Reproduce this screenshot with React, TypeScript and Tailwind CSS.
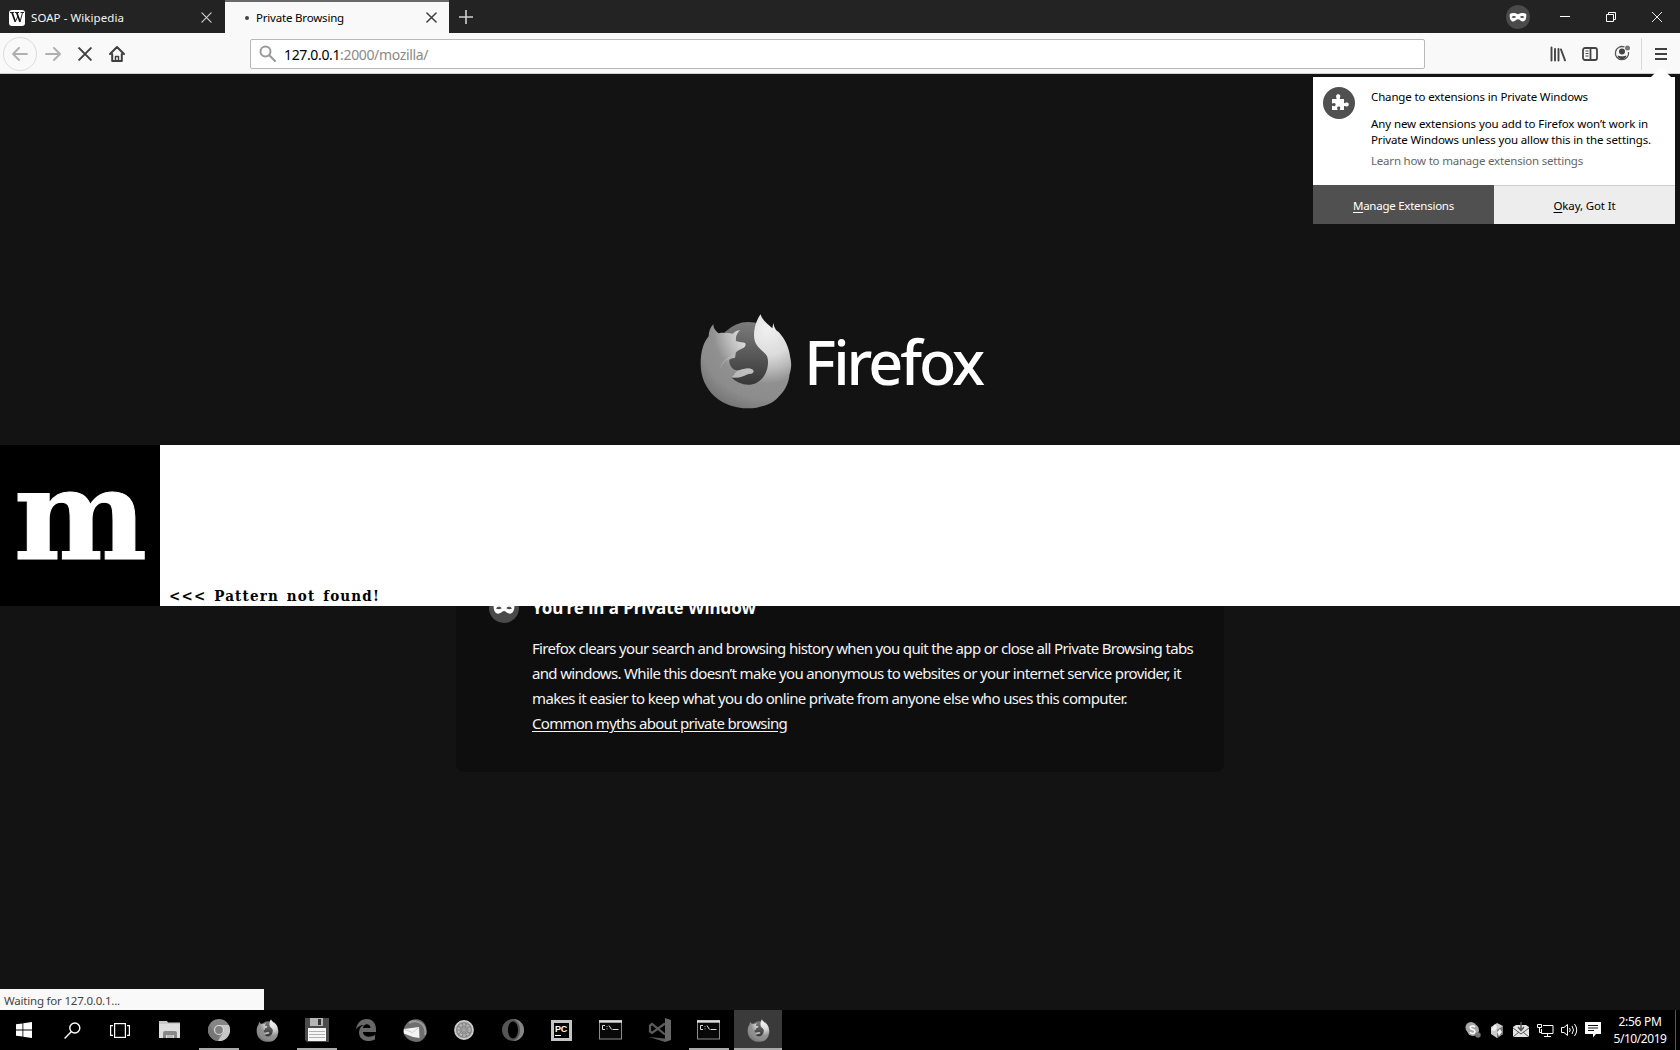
import { useLayoutEffect, useRef, useState, type ReactNode } from "react";

/** A single line of text whose tracking is adjusted so that it spans `width` pixels. */
function Line({ width, className = "", children }: { width: number; className?: string; children: ReactNode }) {
  const ref = useRef<HTMLSpanElement>(null);
  const [spacing, setSpacing] = useState(0);
  useLayoutEffect(() => {
    const el = ref.current;
    if (!el) return;
    const count = (el.textContent || "").length;
    setSpacing((width - el.getBoundingClientRect().width) / count);
  }, [width]);
  return (
    <span className={"block " + className}>
      <span ref={ref} className="inline-block whitespace-pre" style={{ letterSpacing: spacing }}>
        {children}
      </span>
    </span>
  );
}

function Mask({ size }: { size: number }) {
  return (
    <svg width={size} height={size} viewBox="0 0 24 24">
      <circle cx="12" cy="12" r="12" fill="#4a4a4a" />
      <path
        fill="#fff"
        fillRule="evenodd"
        d="M3.8 8.900c2.400-1.400 5.600-1 8.200.4 2.600-1.400 5.800-1.800 8.200-.4.5 3.500-.5 7.600-3.500 7.600-2.100 0-3-2.200-4.700-2.200s-2.600 2.200-4.700 2.200c-3 0-4-4.100-3.500-7.600zM5.600 12.300c1.400.9 3.200.9 4.500-.2-1.200-1.600-3.400-1.500-4.500.2zm8.300-.2c1.300 1.100 3.100 1.100 4.500.2-1.100-1.700-3.300-1.800-4.500-.2z"
      />
    </svg>
  );
}

function Fox({ size, id }: { size: number; id: string }) {
  return (
    <svg width={size} height={size} viewBox="54 38 288 288">
      <defs>
        <radialGradient id={id + "a"} gradientUnits="userSpaceOnUse" cx="262" cy="85" r="265">
          <stop offset="0" stopColor="#f0f0f0" />
          <stop offset="0.3" stopColor="#dcdcdc" />
          <stop offset="0.46" stopColor="#bababa" />
          <stop offset="0.62" stopColor="#909090" />
          <stop offset="0.8" stopColor="#8c8c8c" />
          <stop offset="1" stopColor="#727272" />
        </radialGradient>
        <linearGradient id={id + "b"} x1="0.5" y1="0" x2="0.5" y2="1">
          <stop offset="0" stopColor="#7c7c7c" />
          <stop offset="1" stopColor="#363636" />
        </linearGradient>
      </defs>
      <circle cx="205" cy="160" r="95" fill={"url(#" + id + "b)"} />
      <path
        fill={"url(#" + id + "a)"}
        d="M62 190C62 150 72 125 86 108 86 92 92 80 100 72 100 85 108 92 115 99 128 97 145 97 158 100 165 93 172 90 181 89 172 97 166 107 168 122 178 126 190 126 195 128 199 132 196 140 190 143 182 148 172 150 167 157L165 173C160 172 150 174 148 180 146 195 160 215 180 210 195 203 210 203 218 208 224 214 218 220 210 220 195 222 185 235 154 231 175 252 205 260 230 247 262 230 268 190 262 170 255 150 222 145 222 105 222 75 235 50 242 42 246 60 266 72 277 84L280 68C283 85 290 92 296 95 315 115 328 145 330 168 335 190 335 200 328 225 328 240 318 270 295 290 280 310 250 318 230 322 140 335 62 280 62 190Z"
      />
      <path d="M167 157L165 173C155 171 128 178 122 205 122 185 140 172 167 157Z" fill="#bcbcbc" opacity=".6" />
      <path d="M172 211C195 203 210 203 218 208 224 214 218 220 210 220 195 222 185 235 154 231 162 226 166 216 172 211Z" fill="#c4c4c4" opacity=".8" />
    </svg>
  );
}

function CloseX({ size, color, w = 1.5 }: { size: number; color: string; w?: number }) {
  return (
    <svg width={size} height={size} viewBox="0 0 12 12" stroke={color} strokeWidth={w} strokeLinecap="round">
      <path d="M1 1l10 10M11 1L1 11" />
    </svg>
  );
}

function TitleBar() {
  return (
    <div className="flex h-[33px] bg-[#232323]">
      <div className="flex w-[225px] items-center pl-[9px] pr-[13px] text-[11.5px] text-[#f4f4f4]">
        <div className="mr-[6px] mt-[2px] flex h-4 w-4 items-center justify-center rounded-[3px] bg-white">
          <svg width="14" height="11" viewBox="0 0 14 11" fill="none" stroke="#111">
            <path d="M0 .5h4.200M5 .5h4M10.500 .5H14" strokeWidth=".9" />
            <path d="M2 .5l3.300 9.200M6.700 .5l3.300 9.200" strokeWidth="1.700" />
            <path d="M5.300 9.800L8 4M10 9.800L12.500 .8" strokeWidth=".9" />
          </svg>
        </div>
        <Line width={93} className="mt-[2px]">SOAP - Wikipedia</Line>
        <span className="ml-auto mt-[1px]"><CloseX size={11} color="#c8c8c8" w={1.4} /></span>
      </div>
      <div className="flex w-[224px] items-center border-t-2 border-[#6a6a6a] bg-[#f9f9f9] pl-[20px] pr-[12px] text-[11.5px] text-black">
        <span className="mr-[7px] h-1 w-1 rounded-full bg-[#444]" />
        <Line width={88}>Private Browsing</Line>
        <span className="ml-auto"><CloseX size={11} color="#3c3c3c" w={1.6} /></span>
      </div>
      <div className="flex items-center pl-[10px]">
        <svg width="14" height="14" viewBox="0 0 14 14" stroke="#d0d0d0" strokeWidth="1.6"><path d="M7 0v14M0 7h14" /></svg>
      </div>
      <div className="ml-auto flex items-center">
        <span className="mt-px"><Mask size={24} /></span>
        <span className="ml-[30px] h-px w-[10px] bg-white" />
        <svg className="ml-[36px]" width="10" height="10" viewBox="0 0 10 10" fill="none" stroke="#fff"><path d="M.5 2.500h7v7h-7zM2.500 2.500v-2h7v7h-2" /></svg>
        <svg className="ml-[36px] mr-[18px]" width="10" height="10" viewBox="0 0 10 10" stroke="#fff" strokeWidth="0.9"><path d="M0 0l10 10M10 0L0 10" /></svg>
      </div>
    </div>
  );
}

function Toolbar() {
  return (
    <div className="flex h-[41px] items-center border-b border-[#cfcfcf] bg-[#f9f9f9] pt-px">
      <div className="ml-[3px] flex h-[34px] w-[34px] items-center justify-center rounded-full border border-[#dcdcdc]">
        <svg width="16" height="14" viewBox="0 0 16 14" fill="none" stroke="#b0b0b0" strokeWidth="1.9" strokeLinecap="round" strokeLinejoin="round"><path d="M15 7H1M7 1L1 7l6 6" /></svg>
      </div>
      <svg className="ml-[8px]" width="16" height="14" viewBox="0 0 16 14" fill="none" stroke="#b0b0b0" strokeWidth="1.900" strokeLinecap="round" strokeLinejoin="round"><path d="M1 7h14M9 1l6 6-6 6" /></svg>
      <span className="ml-[17px]"><CloseX size={14} color="#404040" w={1.7} /></span>
      <svg className="ml-[17px]" width="16" height="16" viewBox="0 0 16 16" fill="none" stroke="#404040" strokeWidth="2" strokeLinejoin="round" strokeLinecap="round">
        <path d="M1 8l7-7 7 7M3.200 8v7h9.600V8" />
        <path d="M6.500 15v-4.500h3V15" strokeWidth="1.500" />
      </svg>
      <div className="ml-[125px] flex h-[30px] w-[1175px] items-center rounded-[2px] border border-[#b8b8b8] bg-white pl-2">
        <svg width="17" height="17" viewBox="0 0 17 17" fill="none" stroke="#999" strokeWidth="2" strokeLinecap="round"><circle cx="6.500" cy="6.500" r="5" /><path d="M10.300 10.300L16 16" /></svg>
        <Line width={144} className="ml-[8px] mt-px text-[14px] text-[#8a8a8a]"><span className="text-black">127.0.0.1</span>:2000/mozilla/</Line>
      </div>
      <svg className="ml-[125px]" width="16" height="16" viewBox="0 0 16 16" fill="none" stroke="#444" strokeWidth="1.900" strokeLinecap="round"><path d="M1.500 1.500v13M5 3v11.500M8.500 3v11.500M11 3.500l4 10.800" /></svg>
      <svg className="ml-4" width="16" height="16" viewBox="0 0 16 16" fill="none" stroke="#444" strokeWidth="1.800"><rect x="1" y="2" width="14" height="12" rx="2" /><path d="M8.500 2v12" /><path d="M3.500 5h3M3.500 7.500h3M3.500 10h3" strokeWidth="1" /></svg>
      <svg className="ml-4" width="17" height="17" viewBox="0 0 17 17" fill="none">
        <path d="M10.500 2A6.600 6.600 0 1 0 14.500 7" stroke="#555" strokeWidth="1.300" />
        <circle cx="8" cy="6.500" r="3" fill="#444" />
        <path d="M3.500 10.500c2 1 7 1 9 0-1 5-8 5-9 0z" fill="#444" />
        <circle cx="13.500" cy="3" r="2.500" fill="#777" />
      </svg>
      <span className="ml-[10px] h-8 w-px bg-[#d8d8d8]" />
      <svg className="ml-[13px]" width="12" height="12" viewBox="0 0 12 12" stroke="#404040" strokeWidth="1.800"><path d="M0 1h12M0 6h12M0 11h12" /></svg>
    </div>
  );
}

function ExtensionsPopup() {
  return (
    <div className="absolute right-[5px] top-[68px] w-[362px] text-[11.5px] text-black">
      <svg className="ml-[338px] block" width="20" height="9" viewBox="0 0 20 9"><path d="M0 9l8.500-8.200q1.500-1 3 0L20 9z" fill="#fff" /></svg>
      <div className="flex h-[108px] bg-white pl-[10px] pt-[10px]">
        <svg width="32" height="32" viewBox="0 0 32 32">
          <circle cx="16" cy="16" r="16" fill="#505050" />
          <path fill="#fff" d="M9 12h4.500c.5-1-.6-1.500-.4-3 .2-2.500 4-2.500 4.200 0 .1 1.500-1 2-.4 3H21v4c1 .6 1.500-.5 3-.4 2.400.2 2.400 3.700 0 3.900-1.500.1-2-1-3-.4V23h-4c-.6-1 .4-1.300.3-2.300-.2-1.700-3-1.700-3.200 0-.1 1 .9 1.300.3 2.300H9v-4c.8-.6 1.200.4 2.200.3 1.900-.2 1.900-3.100 0-3.300-1-.1-1.400.9-2.200.3z" />
        </svg>
        <div className="ml-4 mt-px leading-[16px]">
          <Line width={217} className="mt-[1px]">Change to extensions in Private Windows</Line>
          <Line width={277} className="mt-[11px]">Any new extensions you add to Firefox won’t work in</Line>
          <Line width={280}>Private Windows unless you allow this in the settings.</Line>
          <Line width={212} className="mt-[5px] text-[#666]">Learn how to manage extension settings</Line>
        </div>
      </div>
      <div className="flex h-[39px]">
        <div className="flex w-[181px] items-center justify-center bg-[#505050] text-white">
          <Line width={101} className="mt-[3px]"><span className="underline underline-offset-2">M</span>anage Extensions</Line>
        </div>
        <div className="flex w-[181px] items-center justify-center border-t border-[#cfcfcf] bg-[#ededed]">
          <Line width={62} className="mt-[2px]"><span className="underline underline-offset-2">O</span>kay, Got It</Line>
        </div>
      </div>
    </div>
  );
}

function Content() {
  return (
    <div className="flex h-[936px] flex-col bg-[#131313]">
      <div className="flex h-[371px] items-start pl-[698px] pt-[239px]">
        <Fox size={96} id="logo" />
        <Line width={178} className="ml-[10px] mt-[7px] text-[61px] font-medium leading-[84px] text-white">Firefox</Line>
      </div>
      <div className="flex h-[161px] shrink-0 bg-white">
        <div className="flex w-40 justify-center bg-black">
          <span className="mt-[5px] block pl-px font-['DejaVu_Serif',serif] text-[126px] font-bold leading-[130px] text-white [-webkit-text-stroke:1px_white]">m</span>
        </div>
        <Line width={211} className="self-end pl-[9px] font-['DejaVu_Serif_Condensed','DejaVu_Serif',serif] text-[15px] font-bold leading-[20px] text-black [word-spacing:2px]">{"<<< Pattern not found!"}</Line>
      </div>
      <div className="ml-[456px] flex h-[166px] w-[768px] overflow-hidden rounded-b-[8px] bg-[#0e0e0e] pl-[33px] text-[#f4f4f4]">
        <div className="-mt-[13px]"><Mask size={30} /></div>
        <div className="-mt-[11px] ml-[13px] text-[15px] leading-[25px]">
          <Line width={224} className="mb-[16px] text-[17px] font-bold text-white">You’re in a Private Window</Line>
          <Line width={661}>Firefox clears your search and browsing history when you quit the app or close all Private Browsing tabs</Line>
          <Line width={649}>and windows. While this doesn’t make you anonymous to websites or your internet service provider, it</Line>
          <Line width={595}>makes it easier to keep what you do online private from anyone else who uses this computer.</Line>
          <Line width={255}><span className="underline underline-offset-2">Common myths about private browsing</span></Line>
        </div>
      </div>
      <div className="mt-auto flex h-[21px] w-[264px] items-center bg-[#f9f9f9] pl-1 pt-[2px] text-[11.5px] text-[#444]">
        <Line width={116}>Waiting for 127.0.0.1...</Line>
      </div>
    </div>
  );
}

function Cmd() {
  return (
    <svg width="24" height="20" viewBox="0 0 24 20">
      <rect x=".5" y=".5" width="22" height="18.500" fill="#080808" stroke="#8c8c8c" />
      <path d="M0 1.500h23" stroke="#ddd" strokeWidth="2.400" />
      <path d="M6 5.500H3.500v4H6M8 6v.8M8 8.500v.8M10 5.500l2.500 4M13.500 9.500h6" stroke="#ddd" fill="none" />
    </svg>
  );
}

const apps: { icon: ReactNode; open?: boolean; active?: boolean }[] = [
  {
    icon: (
      <svg width="22" height="20" viewBox="0 0 22 20">
        <path d="M0 3V1h8l1 1.500h12V18H0z" fill="#c9c9c9" /><path d="M0 4h21v14H0z" fill="#dedede" />
        <path d="M4 18v-5q0-2 2-2h10q2 0 2 2v5h-3v-3H7v3z" fill="#888" /><path d="M8 15h6v3H8z" fill="#bbb" />
      </svg>
    ),
  },
  {
    icon: (
      <svg width="22" height="22" viewBox="0 0 22 22">
        <circle cx="11" cy="11" r="11" fill="#868686" />
        <path d="M11 6h9.800A11 11 0 0 1 10 22l5.300-8.500z" fill="#c6c6c6" />
        <path d="M1.500 5.500L6.700 13.500 11 16l-1 6A11 11 0 0 1 1.500 5.500z" fill="#767676" />
        <circle cx="11" cy="11" r="5" fill="#ddd" /><circle cx="11" cy="11" r="3.900" fill="#808080" />
      </svg>
    ),
    open: true,
  },
  { icon: <Fox size={23} id="t1" /> },
  {
    icon: (
      <svg width="24" height="24" viewBox="0 0 24 24">
        <path d="M0 0h24v24H2l-2-2z" fill="#4b4b4b" /><path d="M5 0h13v8H5z" fill="#b5b5b5" /><path d="M13 1h3v6h-3z" fill="#333" />
        <path d="M3 10h18v13H3z" fill="#f6f6f6" /><path d="M4 13.500h16M4 16.500h16M4 19.500h16" stroke="#b0b0b0" />
      </svg>
    ),
    open: true,
  },
  {
    icon: (
      <svg width="22" height="22" viewBox="0 0 22 22">
        <path fill="#696969" d="M1 10C2 4 6 0 11.500 0 18 0 21 5 21 10v3H8c0 5 7 6 12 3v4.500c-7 3.500-16 1-16-7C4 10 6 7 9 6 5 6 3 8 1 10zM8 9h7.500c0-5-7-5-7.500 0z" />
      </svg>
    ),
  },
  {
    icon: (
      <svg width="24" height="23" viewBox="0 0 24 23">
        <path d="M5 3C8 0 15-1 19 2c5 4 6 11 3 16-2 3-5 5-9 5C6 22 1 18 0 12 1 8 3 5 5 3z" fill="#6e6e6e" />
        <path d="M6 4c4-3 10-2 14 2 2 3 3 7 2 10" stroke="#9c9c9c" strokeWidth="2" fill="none" />
        <path d="M1 10l15-2 .5 11L10 18 1 14.500z" fill="#f4f4f4" /><path d="M1.500 10.500l8 3L16 8.500" stroke="#c4c4c4" strokeWidth=".8" fill="none" />
      </svg>
    ),
  },
  {
    icon: (
      <svg width="20" height="20" viewBox="0 0 20 20">
        <circle cx="10" cy="10" r="9" fill="#8a8a8a" stroke="#ccc" strokeWidth="1.800" />
        <circle cx="10" cy="10" r="5.500" fill="none" stroke="#bdbdbd" strokeWidth="2" strokeDasharray="2 1.500" />
        <path d="M10 3v14M3 10h14M5 5l10 10M15 5L5 15" stroke="#aaa" strokeWidth=".8" />
      </svg>
    ),
  },
  {
    icon: (
      <svg width="22" height="22" viewBox="0 0 22 22">
        <path fillRule="evenodd" fill="#555" d="M11 0a11 11 0 1 0 0 22 11 11 0 0 0 0-22zm0 2.500c3 0 5 4 5 8.500s-2 8.500-5 8.500-5-4-5-8.500 2-8.500 5-8.500z" />
        <path fill="#858585" d="M11 0c7 0 11 5.500 11 11s-4 11-11 11c3-1 7-4 7-11S14 1 11 0z" />
      </svg>
    ),
  },
  {
    icon: (
      <div className="flex h-[21px] w-[21px] flex-col border-[3px] border-[#c4c4c4] bg-black pl-px pt-[2px] font-['Liberation_Sans',sans-serif] text-[9px] font-bold leading-[8px] tracking-tight text-white">
        PC<span className="mt-[2px] h-px w-[6px] bg-white" />
      </div>
    ),
  },
  { icon: <Cmd /> },
  {
    icon: (
      <svg width="24" height="24" viewBox="0 0 24 24">
        <path d="M17 0l6 2v20l-6 2z" fill="#666" /><path d="M17 20.500L1 19l16 5z" fill="#5c5c5c" />
        <path d="M17 5.500L4 15l-2-1.500V7.500L4 6l13 10.500" fill="none" stroke="#5c5c5c" strokeWidth="2.200" />
      </svg>
    ),
  },
  { icon: <Cmd />, open: true },
  { icon: <Fox size={23} id="t2" />, open: true, active: true },
];

function Taskbar() {
  return (
    <div className="flex h-10 bg-black">
      <div className="flex w-12 items-center justify-center">
        <svg width="16" height="16" viewBox="0 0 16 16" fill="#fff"><path d="M0 2.300L6.500 1.400v6.200H0zM7.300 1.300L16 0v7.600H7.300zM0 8.400h6.500v6.200L0 13.700zM7.300 8.400H16V16l-8.700-1.300z" /></svg>
      </div>
      <div className="flex w-12 items-center justify-center">
        <svg width="17" height="17" viewBox="0 0 17 17" fill="none" stroke="#fff" strokeWidth="1.400"><circle cx="10.800" cy="6" r="5" /><path d="M7.200 9.700L.6 16.400" /></svg>
      </div>
      <div className="flex w-12 items-center justify-center">
        <svg width="20" height="15" viewBox="0 0 20 15" fill="none" stroke="#fff" strokeWidth="1.200"><rect x="4.600" y=".6" width="10.800" height="13.800" /><path d="M3 2.600H.6v9.800H3M17 2.600h2.400v9.800H17" /></svg>
      </div>
      <div className="flex pl-px">
        {apps.map((app, i) => (
          <div key={i} className={"flex flex-col items-center " + (app.active ? "ml-px w-[48px] bg-[#3a3a3a]" : "w-[49px]")}>
            <div className="flex h-[38px] items-center justify-center pt-[2px]">{app.icon}</div>
            {app.open && <span className={"h-[2px] bg-[#aaa] " + (app.active ? "w-full" : "w-10")} />}
          </div>
        ))}
      </div>
      <div className="ml-auto flex items-center">
        <div className="flex w-6 justify-center">
          <svg width="16" height="16" viewBox="0 0 16 16"><circle cx="6" cy="5.500" r="5.500" fill="#a8a8a8" /><circle cx="8" cy="8" r="6" fill="#a8a8a8" /><path d="M10 5C9 3.500 5 3.500 5.200 5.700 5.500 8 10 7 10 9.500 9.800 12 6 12 5 10" fill="none" stroke="#fff" strokeWidth="1.500" /><circle cx="13" cy="13" r="2.700" fill="#777" /></svg>
        </div>
        <div className="flex w-6 justify-center">
          <svg width="14" height="15" viewBox="0 0 14 15"><path d="M7 0l6 3v8l-6 4-6-4V4z" fill="#ccc" /><path d="M7 7l6-4v8l-6 4z" fill="#777" /><path d="M5 1L1 7l4 1 2-4zM7 9l3-3 2 3-3 4z" fill="#f2f2f2" /></svg>
        </div>
        <div className="flex w-6 justify-center">
          <svg width="16" height="16" viewBox="0 0 16 16"><path d="M0 5l3-2h10l3 2v10H0z" fill="#e4e4e4" /><path d="M0 6l8 6 8-6M0 15l6-5M16 15l-6-5" stroke="#555" fill="none" /><path d="M8 0v8M5 5l3 3.500L11 5" stroke="#555" strokeWidth="1.500" fill="none" /></svg>
        </div>
        <div className="flex w-6 justify-center">
          <svg width="17" height="15" viewBox="0 0 17 15" fill="none" stroke="#fff"><path d="M6 2.500h10v8H4.500V6M10.500 10.500v3M7 13.500h7M.5 1.500h4v3h-4zM2.500 4.500v5h2" /></svg>
        </div>
        <div className="flex w-6 justify-center">
          <svg width="17" height="14" viewBox="0 0 17 14" fill="none" stroke="#fff"><path d="M.5 4.500H3l3.500-3v11L3 9.500H.5zM8.500 5q1.500 2 0 4M11 3q3 4 0 8M13.500 1q4.500 6 0 12" /></svg>
        </div>
        <div className="flex w-6 justify-center">
          <svg width="17" height="16" viewBox="0 0 17 16"><path d="M0 0h16v12h-5l-3 3.500V12H0z" fill="#fff" /><path d="M3 3.500h10M3 6h10M3 8.500h6" stroke="#111" /></svg>
        </div>
        <div className="ml-[8px] flex w-[54px] flex-col items-center text-[12px] leading-[17px] text-white">
          <Line width={43}>2:56 PM</Line>
          <Line width={53}>5/10/2019</Line>
        </div>
        <span className="ml-[8px] mr-[4px] h-10 w-px bg-[#555]" />
      </div>
    </div>
  );
}

export default function App() {
  return (
    <div className="relative flex h-[1050px] w-[1680px] flex-col overflow-hidden bg-black font-['Noto_Sans',sans-serif]">
      <TitleBar />
      <Toolbar />
      <Content />
      <Taskbar />
      <ExtensionsPopup />
    </div>
  );
}
